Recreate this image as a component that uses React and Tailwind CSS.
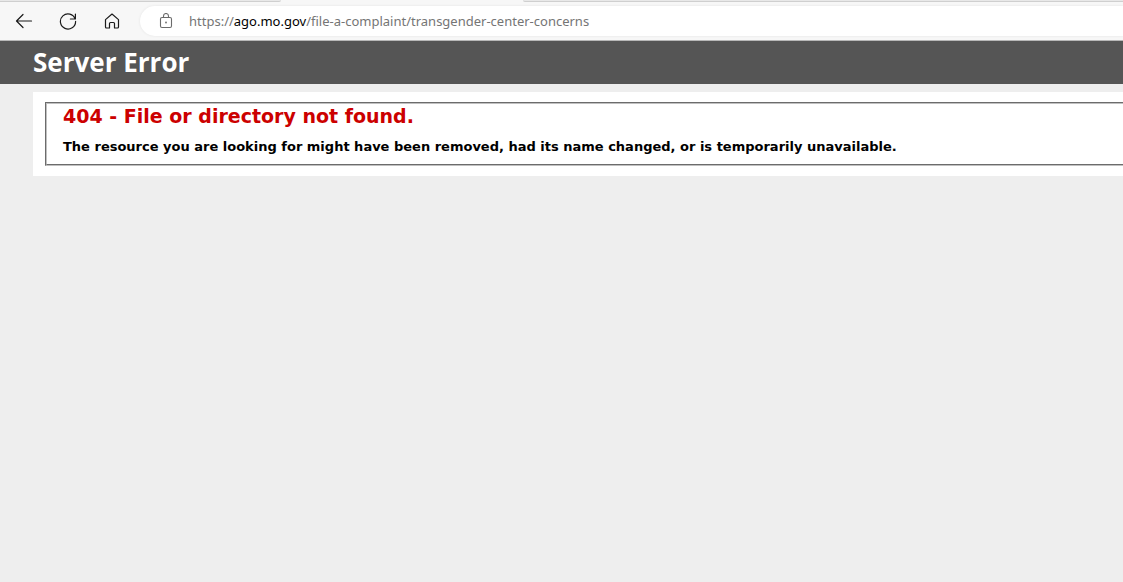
import { useState } from 'react'

const URL_PARTS = {
  scheme: 'https://',
  host: 'ago.mo.gov',
  path: '/file-a-complaint/transgender-center-concerns',
}

const FULL_URL = URL_PARTS.scheme + URL_PARTS.host + URL_PARTS.path

function ToolbarButton({ label, children }) {
  return (
    <button type="button" aria-label={label} className="flex size-8 items-center justify-center rounded text-[#1b1b1b] hover:bg-black/5">
      <svg width="18" height="18" viewBox="0 0 18 18" fill="none" stroke="currentColor" strokeWidth="1.2" strokeLinecap="round" strokeLinejoin="round" aria-hidden="true">
        {children}
      </svg>
    </button>
  )
}

function AddressBar() {
  const [value, setValue] = useState('')

  return (
    <div className="relative flex h-[30px] flex-1 items-center rounded-l-full bg-white pl-[19px] shadow-[0_0_3px_rgba(0,0,0,0.08)]">
      <svg width="14" height="16" viewBox="0 0 14 16" fill="none" stroke="#6b6b6b" strokeWidth="1.1" className="shrink-0" aria-hidden="true">
        <rect x="1.5" y="4.5" width="11" height="10" rx="1.5" />
        <path d="M4.5 4.5V3a2.5 2.5 0 0 1 5 0v1.5" />
        <circle cx="7" cy="9.5" r="0.9" fill="#6b6b6b" stroke="none" />
      </svg>
      <input
        type="text"
        aria-label="Address"
        value={value}
        onFocus={() => setValue(FULL_URL)}
        onBlur={() => setValue('')}
        onChange={e => setValue(e.target.value)}
        className="ml-4 h-full min-w-0 flex-1 bg-transparent text-[13px] text-black outline-none"
      />
      {/* The host stands out only while the field is not being edited */}
      {!value && (
        <span className="pointer-events-none absolute left-[49px] text-[13px] leading-5 whitespace-nowrap text-[#757575]">
          {URL_PARTS.scheme}
          <span className="text-black">{URL_PARTS.host}</span>
          {URL_PARTS.path}
        </span>
      )}
    </div>
  )
}

function BrowserChrome() {
  return (
    <div className="border-b border-[#b8b8b8] bg-[#f7f7f7] font-['Noto_Sans','Open_Sans',sans-serif]">
      <div className="flex h-[2px]">
        <div className="w-[281px] rounded-br-sm border-b border-[#cfcfcf] bg-[#e8e8e8]" />
        <div className="w-[242px]" />
        <div className="flex-1 rounded-bl-sm border-b border-[#cfcfcf] bg-[#e8e8e8]" />
      </div>
      <div className="flex h-[38px] items-center pl-2">
        <div className="mr-3 flex gap-3">
          <ToolbarButton label="Back">
            <path d="M16.5 9H1.5M8 2.5 1.5 9 8 15.5" />
          </ToolbarButton>
          <ToolbarButton label="Refresh">
            <path d="M16.2 7A7.6 7.6 0 1 0 16.6 9.4M16.4 2v5h-5" />
          </ToolbarButton>
          <ToolbarButton label="Home">
            <path d="M2.5 7.6 9 2l6.5 5.6V15a1 1 0 0 1-1 1H11.5v-4.5a1 1 0 0 0-1-1h-3a1 1 0 0 0-1 1V16H3.5a1 1 0 0 1-1-1Z" />
          </ToolbarButton>
        </div>
        <AddressBar />
      </div>
    </div>
  )
}

export default function App() {
  return (
    <div className="min-h-screen overflow-hidden bg-[#eeeeee]">
      <BrowserChrome />
      <header className="bg-[#555555] py-1 pl-[33px]">
        <h1 className="font-['Open_Sans',sans-serif] text-[26px] leading-[35px] font-bold text-white">Server Error</h1>
      </header>
      <main className="pt-2 pl-[33px] font-['DejaVu_Sans',sans-serif] font-bold">
        <div className="bg-white py-[10px] pl-3">
          <fieldset className="border-2 border-r-0 border-[#c0c0c0] pb-[7px] pl-4 [border-style:groove]">
            <h2 className="text-[19px] leading-6 text-[#cc0000]">404 - File or directory not found.</h2>
            <h3 className="mt-[9px] text-[13px] leading-5 text-black">
              The resource you are looking for might have been removed, had its name changed, or is temporarily unavailable.
            </h3>
          </fieldset>
        </div>
      </main>
    </div>
  )
}
